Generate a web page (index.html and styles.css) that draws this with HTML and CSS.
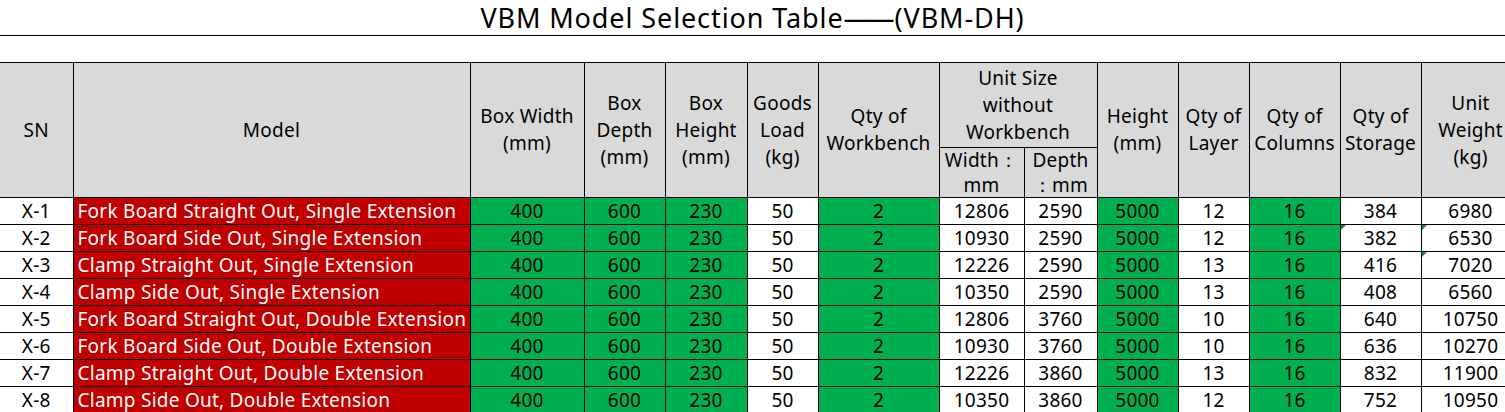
FILE: index.html
```html
<!DOCTYPE html>
<html>
<head>
<meta charset="utf-8">
<link rel="stylesheet" href="styles.css">
</head>
<body>
<div class="title">VBM Model Selection Table<span class="dash">——</span>(VBM-DH)</div>
<div class="spacer"></div>
<table class="sel">
  <colgroup>
    <col class="c-sn"><col class="c-model"><col class="c-bw"><col class="c-bd"><col class="c-bh"><col class="c-gl"><col class="c-wb"><col class="c-w"><col class="c-d"><col class="c-h"><col class="c-l"><col class="c-col"><col class="c-st"><col class="c-uw">
  </colgroup>
  <thead>
    <tr class="h1">
      <th rowspan="2">SN</th>
      <th rowspan="2">Model</th>
      <th rowspan="2">Box Width<br>(mm)</th>
      <th rowspan="2">Box<br>Depth<br>(mm)</th>
      <th rowspan="2">Box<br>Height<br>(mm)</th>
      <th rowspan="2">Goods<br>Load<br>(kg)</th>
      <th rowspan="2">Qty of<br>Workbench</th>
      <th colspan="2" class="top">Unit Size<br>without<br>Workbench</th>
      <th rowspan="2">Height<br>(mm)</th>
      <th rowspan="2">Qty of<br>Layer</th>
      <th rowspan="2">Qty of<br>Columns</th>
      <th rowspan="2">Qty of<br>Storage</th>
      <th rowspan="2">Unit<br>Weight<br>(kg)</th>
    </tr>
    <tr class="h2">
      <th class="sub"><div class="subin">Width：<br>mm</div></th>
      <th class="sub"><div class="subin">Depth<br>：mm</div></th>
    </tr>
  </thead>
  <tbody>
    <tr><td>X-1</td><td class="red">Fork Board Straight Out, Single Extension</td><td class="g">400</td><td class="g">600</td><td class="g">230</td><td>50</td><td class="g">2</td><td>12806</td><td>2590</td><td class="g">5000</td><td>12</td><td class="g">16</td><td>384</td><td>6980</td></tr>
    <tr><td>X-2</td><td class="red">Fork Board Side Out, Single Extension</td><td class="g">400</td><td class="g">600</td><td class="g">230</td><td>50</td><td class="g">2</td><td>10930</td><td>2590</td><td class="g">5000</td><td>12</td><td class="g">16</td><td class="flag">382</td><td class="flag">6530</td></tr>
    <tr><td>X-3</td><td class="red">Clamp Straight Out, Single Extension</td><td class="g">400</td><td class="g">600</td><td class="g">230</td><td>50</td><td class="g">2</td><td>12226</td><td>2590</td><td class="g">5000</td><td>13</td><td class="g">16</td><td>416</td><td class="flag">7020</td></tr>
    <tr><td>X-4</td><td class="red">Clamp Side Out, Single Extension</td><td class="g">400</td><td class="g">600</td><td class="g">230</td><td>50</td><td class="g">2</td><td>10350</td><td>2590</td><td class="g">5000</td><td>13</td><td class="g">16</td><td>408</td><td>6560</td></tr>
    <tr><td>X-5</td><td class="red">Fork Board Straight Out, Double Extension</td><td class="g">400</td><td class="g">600</td><td class="g">230</td><td>50</td><td class="g">2</td><td>12806</td><td>3760</td><td class="g">5000</td><td>10</td><td class="g">16</td><td>640</td><td>10750</td></tr>
    <tr><td>X-6</td><td class="red">Fork Board Side Out, Double Extension</td><td class="g">400</td><td class="g">600</td><td class="g">230</td><td>50</td><td class="g">2</td><td>10930</td><td>3760</td><td class="g">5000</td><td>10</td><td class="g">16</td><td>636</td><td>10270</td></tr>
    <tr><td>X-7</td><td class="red">Clamp Straight Out, Double Extension</td><td class="g">400</td><td class="g">600</td><td class="g">230</td><td>50</td><td class="g">2</td><td>12226</td><td>3860</td><td class="g">5000</td><td>13</td><td class="g">16</td><td>832</td><td>11900</td></tr>
    <tr><td>X-8</td><td class="red">Clamp Side Out, Double Extension</td><td class="g">400</td><td class="g">600</td><td class="g">230</td><td>50</td><td class="g">2</td><td>10350</td><td>3860</td><td class="g">5000</td><td>12</td><td class="g">16</td><td>752</td><td>10950</td></tr>
  </tbody>
</table>
</body>
</html>
```
FILE: styles.css
```css
html, body {
  margin: 0;
  padding: 0;
  background: #fff;
  overflow: hidden;
}
body {
  font-family: "Noto Sans", "Open Sans", sans-serif;
  color: #000;
  width: 1505px;
}
.title {
  box-sizing: border-box;
  height: 36px;
  border-bottom: 1px solid #000;
  text-align: center;
  font-size: 27px;
  line-height: 36px;
  letter-spacing: 0.9px;
  white-space: nowrap;
}
.title .dash {
  letter-spacing: -3px;
  margin-right: 3px;
}
.spacer {
  height: 26px;
}
.sel {
  border-collapse: collapse;
  table-layout: fixed;
  width: 1520px;
  font-size: 19px;
  letter-spacing: 0.25px;
}
.c-sn { width: 73px; }
.c-model { width: 397px; }
.c-bw { width: 114px; }
.c-bd { width: 81px; }
.c-bh { width: 82px; }
.c-gl { width: 71px; }
.c-wb { width: 121px; }
.c-w { width: 85px; }
.c-d { width: 73px; }
.c-h { width: 81px; }
.c-l { width: 71px; }
.c-col { width: 91px; }
.c-st { width: 81px; }
.c-uw { width: 99px; }
.sel th, .sel td {
  border: 1px solid #000;
  padding: 0;
  text-align: center;
  vertical-align: middle;
  overflow: hidden;
  white-space: nowrap;
}
.sel th {
  background: #d9d9d9;
  font-weight: normal;
  line-height: 27px;
}
.sel th:first-child, .sel td:first-child {
  border-left: none;
}
.sel tr.h1 { height: 85px; }
.sel tr.h2 { height: 50px; }
.sel th.sub {
  height: 49px;
  vertical-align: top;
  line-height: 25px;
}
.sel th.sub .subin {
  height: 49px;
  overflow: hidden;
  padding-top: 0;
}
.sel tbody tr { height: 27px; }
.sel td {
  line-height: 26px;
  height: 26px;
  position: relative;
}
.sel td.red {
  background: #c00000;
  color: #fff;
  text-align: left;
  padding-left: 4px;
}
.sel td.g {
  background: #00b050;
}
.sel td.flag::before {
  content: "";
  position: absolute;
  left: 0;
  top: 0;
  border-top: 5px solid #1e8a3c;
  border-right: 5px solid transparent;
}
```
